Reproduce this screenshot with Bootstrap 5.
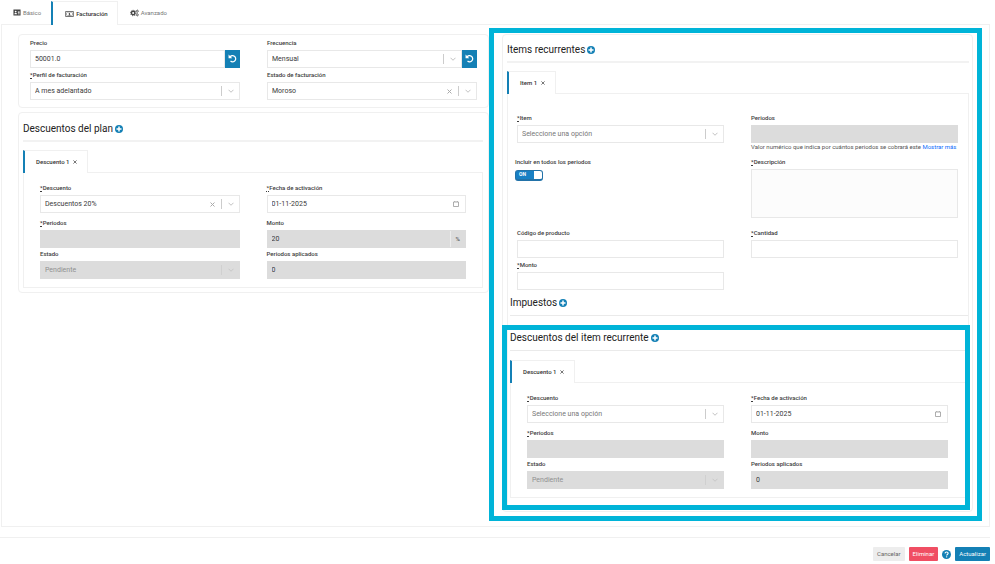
<!DOCTYPE html>
<html lang="es">
<head>
<meta charset="utf-8">
<meta name="viewport" content="width=device-width, initial-scale=1">
<title>Facturación</title>
<link rel="stylesheet" href="https://cdn.jsdelivr.net/npm/bootstrap@5.3.0/dist/css/bootstrap.min.css">
<style>
:root { --line: #f0f0f0; --field-line: #e8e8e8; --brand: #1480b5; --callout: #00b4d8; --ink: #484848; }
body { font-family: Roboto, "Liberation Sans", sans-serif; font-size: 6px; line-height: 12px; color: var(--ink); background: #fff; }
svg { display: block; flex: none; }
.main-tabs { height: 24px; padding-left: 2px; padding-top: 1px; }
.main-tabs .tab-link { display: flex; align-items: center; gap: 2px; padding: 0 10px 0 11px; border: 0; background: none; color: #777; }
.main-tabs .tab-link svg { color: #444; }
.main-tabs .tab-link.current, .sub-tab { border: 1px solid var(--line); border-left: 2px solid var(--brand); border-bottom: 0; background: #fff; color: #333; font-weight: 500; margin-bottom: -1px; }
.main-tabs .tab-link.current { padding-left: 12px; padding-right: 9px; margin-right: 1px; }
.main-panel { border: 1px solid var(--line); margin: 0 5px 0 1px; padding: 3px 7px 5px 16px; }
.split { grid-template-columns: minmax(0, 471fr) minmax(0, 493fr); }
.left-col { padding-top: 6px; }
.panel { border: 1px solid var(--line); border-radius: 4px; }
.rates { padding: 2px 11px 7px; margin-bottom: 4px; }
.plan { padding: 7px 5px 4px 4px; }
.spot { border: 5px solid var(--callout); padding: 1px 4px 4px 8px; }
.recurring { padding: 6px 3px 1px 4px; }
.heading { display: flex; align-items: center; gap: 2px; height: 18px; margin: 0; font-size: 10px; line-height: 18px; font-weight: 400; color: #222; }
.add-btn, .clear-btn { border: 0; background: none; padding: 0; line-height: 1; color: var(--brand); }
.rule { border: 0; border-top: 1px solid #eaeaea; margin: 3px 0 9px; opacity: 1; }
.rule-wide { border-top: 2px solid #f2f2f2; margin: 2px 0 8px; }
.sub-tab { display: flex; align-items: center; gap: 4px; width: max-content; height: 23px; padding: 0 10px 0 11px; position: relative; }
.sub-tab button { border: 0; background: none; padding: 0; color: #555; }
.sub-body { border: 1px solid var(--line); }
.plan .sub-body { padding: 9px 16px 8px; }
.item-body { padding: 18px 10px 4px 9px; }
.fields { display: grid; grid-template-columns: repeat(2, minmax(0, 1fr)); column-gap: 27px; }
.fields-even { row-gap: 1px; }
.roomy { margin-bottom: 4px; }
.name { display: block; height: 12px; margin-bottom: 1px; line-height: 12px; font-weight: 500; color: #3c3c3c; }
.name abbr { text-decoration: underline dotted; cursor: default; }
.box { display: flex; align-items: center; height: 18px; border: 1px solid var(--field-line); background: #fff; }
.box input, .box select { flex: 1; min-width: 0; height: 16px; padding: 0 4px; border: 0; background: none; color: #3a3a3a; font-size: 7px; line-height: 16px; appearance: none; outline: 0; opacity: 1; }
.box select.empty { color: #777; }
.box.off { background: #dcdcdc; border-color: #dcdcdc; }
.box.off select { color: #909090; }
.box .bar { width: 1px; height: 10px; background: #ccc; margin-right: 6px; }
.box .chev { color: #bbb; margin-right: 5px; }
.box.off .bar { background: #d0d0d0; }
.box.off .chev { color: #c4c4c4; }
.box .cal { margin-right: 6px; color: #999; }
.clear-btn { color: #aaa; margin-right: 6px; }
.unit { padding: 0 5px; height: 16px; line-height: 16px; border-left: 1px solid #ececec; }
.undo { display: grid; place-items: center; width: 15px; height: 18px; padding: 0 0 2px; border: 0; background: var(--brand); color: #fff; }
.area { display: block; width: 100%; height: 49px; border: 1px solid var(--field-line); background: #fcfcfc; resize: none; font-size: 7px; }
.hint { line-height: 8px; color: #555; white-space: nowrap; }
.hint a { color: #0d6efd; text-decoration: none; }
.item-row { height: 43px; }
.desc-row { height: 70px; }
.toggle-field { margin-left: -2px; }
.toggle { appearance: none; display: block; width: 28px; height: 11px; margin: 2px 0 0; border: 1px solid #2272a8; border-bottom-width: 2px; border-radius: 3px; background: linear-gradient(to right, #1880c4 18px, #fff 18px); }
.toggle-wrap { position: relative; }
.toggle-wrap span { position: absolute; left: 4px; top: 0; font-size: 5px; line-height: 9px; font-weight: 700; color: #fff; pointer-events: none; }
.taxes { padding-left: 2px; }
.taxes .rule { margin-bottom: 0; }
.nested { position: relative; margin-top: 9px; padding: 4px 0 12px 2px; }
.nested::after { content: ""; position: absolute; inset: 0 -2px 0 -6px; border: 5px solid var(--callout); pointer-events: none; }
.nested .sub-body { padding: 9px 19px 8px 16px; }
.foot { margin: 10px 5px 0 0; padding-top: 9px; border-top: 1px solid var(--line); gap: 4px; }
.act { height: 14px; padding: 0 4px; border: 0; border-radius: 1px; line-height: 14px; color: #fff; background: var(--brand); }
.act.quiet { background: #ededed; color: #666; }
.act.drop { background: #f04e63; }
</style>
<script src="https://cdn.jsdelivr.net/npm/bootstrap@5.3.0/dist/js/bootstrap.bundle.min.js"></script>
</head>
<body>
<svg class="d-none" aria-hidden="true">
  <symbol id="plus" viewBox="0 0 16 16"><circle cx="8" cy="8" r="8" fill="currentColor"/><path d="M8 3v10M3 8h10" stroke="#fff" stroke-width="3"/></symbol>
  <symbol id="chevron" viewBox="0 0 12 8"><path d="M1 1.500l5 5 5-5" fill="none" stroke="currentColor" stroke-width="1.800"/></symbol>
  <symbol id="cross" viewBox="0 0 10 10"><path d="M1 1l8 8M9 1l-8 8" stroke="currentColor" stroke-width="2"/></symbol>
  <symbol id="calendar" viewBox="0 0 12 12"><path d="M1 2h10v9H1zM3.500 0v2M8.500 0v2" fill="none" stroke="currentColor" stroke-width="1.600"/></symbol>
  <symbol id="undo" viewBox="0 0 16 16"><path d="M3.500 5.500A5.500 5.500 0 1 1 4.500 12.500" fill="none" stroke="currentColor" stroke-width="2.200"/><path d="M1 1v6.500h6.500z" fill="currentColor"/></symbol>
  <symbol id="idcard" viewBox="0 0 18 14"><path fill="currentColor" fill-rule="evenodd" d="M1 0h16v14H1zM6 3a2 2 0 1 0 0 4 2 2 0 0 0 0-4zM3 11h6c0-2-1-3-3-3s-3 1-3 3zM11 3.500v1.500h4V3.500zm0 3v1.500h4V6.500zm0 3V11h4V9.500z"/></symbol>
  <symbol id="money" viewBox="0 0 20 14"><path d="M1 1h18v12H1z" fill="none" stroke="currentColor" stroke-width="1.800"/><path d="M3 5a3 3 0 0 0 2-2h10a3 3 0 0 0 2 2v4a3 3 0 0 0-2 2H5a3 3 0 0 0-2-2z" fill="none" stroke="currentColor" stroke-width=".8"/><path d="M8 4.500h3V9h1.500v1.500h-5V9H9V6H8z" fill="currentColor"/></symbol>
  <symbol id="gears" viewBox="0 0 20 16"><circle cx="7" cy="8" r="3.800" fill="none" stroke="currentColor" stroke-width="3"/><circle cx="7" cy="8" r="6" fill="none" stroke="currentColor" stroke-width="2" stroke-dasharray="2.400 2.310"/><circle cx="16" cy="4" r="2" fill="none" stroke="currentColor" stroke-width="1.500"/><circle cx="16" cy="4" r="3.200" fill="none" stroke="currentColor" stroke-width="1" stroke-dasharray="1.600 1.750"/><circle cx="16" cy="12" r="2" fill="none" stroke="currentColor" stroke-width="1.500"/><circle cx="16" cy="12" r="3.200" fill="none" stroke="currentColor" stroke-width="1" stroke-dasharray="1.600 1.750"/></symbol>
  <symbol id="help" viewBox="0 0 16 16"><circle cx="8" cy="8" r="8" fill="currentColor"/><path d="M5.300 6c.2-1.600 1.300-2.400 2.800-2.400 1.600 0 2.800.9 2.800 2.300 0 2-2.600 1.900-2.600 3.800" fill="none" stroke="#fff" stroke-width="2"/><circle cx="8.200" cy="12.200" r="1.300" fill="#fff"/></symbol>
</svg>

<nav class="main-tabs d-flex" aria-label="Secciones">
  <button class="tab-link" type="button"><svg width="8" height="7"><use href="#idcard"/></svg>Básico</button>
  <button class="tab-link current" type="button"><svg width="9" height="6"><use href="#money"/></svg>Facturación</button>
  <button class="tab-link" type="button"><svg width="9" height="8"><use href="#gears"/></svg>Avanzado</button>
</nav>

<main class="main-panel">
  <div class="split d-grid">
    <div class="left-col">
      <section class="panel rates">
        <div class="fields fields-even">
          <div>
            <label class="name" for="price">Precio</label>
            <div class="d-flex"><div class="box flex-grow-1"><input id="price" type="text" value="50001.0"></div><button class="undo" type="button" aria-label="Restablecer precio"><svg width="9" height="9"><use href="#undo"/></svg></button></div>
          </div>
          <div>
            <label class="name" for="freq">Frecuencia</label>
            <div class="d-flex"><div class="box flex-grow-1"><select id="freq"><option>Mensual</option></select><span class="bar"></span><svg class="chev" width="6" height="4"><use href="#chevron"/></svg></div><button class="undo" type="button" aria-label="Restablecer frecuencia"><svg width="9" height="9"><use href="#undo"/></svg></button></div>
          </div>
          <div>
            <label class="name" for="profile"><abbr>*</abbr>Perfil de facturación</label>
            <div class="box"><select id="profile"><option>A mes adelantado</option></select><span class="bar"></span><svg class="chev" width="6" height="4"><use href="#chevron"/></svg></div>
          </div>
          <div>
            <label class="name" for="billing">Estado de facturación</label>
            <div class="box"><select id="billing"><option>Moroso</option></select><button class="clear-btn" type="button" aria-label="Quitar"><svg width="5" height="5"><use href="#cross"/></svg></button><span class="bar"></span><svg class="chev" width="6" height="4"><use href="#chevron"/></svg></div>
          </div>
        </div>
      </section>

      <section class="panel plan">
        <h2 class="heading">Descuentos del plan <button class="add-btn" type="button" aria-label="Agregar descuento"><svg width="8" height="8"><use href="#plus"/></svg></button></h2>
        <hr class="rule rule-wide">
        <div class="sub-tab">Descuento 1 <button type="button" aria-label="Cerrar"><svg width="4" height="4"><use href="#cross"/></svg></button></div>
        <div class="sub-body">
          <div class="fields">
            <div class="roomy">
              <label class="name" for="disc"><abbr>*</abbr>Descuento</label>
              <div class="box"><select id="disc"><option>Descuentos 20%</option></select><button class="clear-btn" type="button" aria-label="Quitar"><svg width="5" height="5"><use href="#cross"/></svg></button><span class="bar"></span><svg class="chev" width="6" height="4"><use href="#chevron"/></svg></div>
            </div>
            <div class="roomy">
              <label class="name" for="date"><abbr>*</abbr>Fecha de activación</label>
              <div class="box"><input id="date" type="text" value="01-11-2025"><svg class="cal" width="6" height="6"><use href="#calendar"/></svg></div>
            </div>
            <div>
              <label class="name" for="periods"><abbr>*</abbr>Periodos</label>
              <div class="box off"><input id="periods" type="text" disabled></div>
            </div>
            <div>
              <label class="name" for="amount">Monto</label>
              <div class="box off"><input id="amount" type="text" value="20" disabled><span class="unit">%</span></div>
            </div>
            <div>
              <label class="name" for="state">Estado</label>
              <div class="box off"><select id="state" disabled><option>Pendiente</option></select><span class="bar"></span><svg class="chev" width="6" height="4"><use href="#chevron"/></svg></div>
            </div>
            <div>
              <label class="name" for="applied">Periodos aplicados</label>
              <div class="box off"><input id="applied" type="text" value="0" disabled></div>
            </div>
          </div>
        </div>
      </section>
    </div>

    <div class="spot">
      <section class="panel recurring">
        <h2 class="heading">Items recurrentes <button class="add-btn" type="button" aria-label="Agregar item"><svg width="8" height="8"><use href="#plus"/></svg></button></h2>
        <hr class="rule rule-wide">
        <div class="sub-tab">Item 1 <button type="button" aria-label="Cerrar"><svg width="4" height="4"><use href="#cross"/></svg></button></div>
        <div class="sub-body border-bottom-0">
          <div class="item-body">
            <div class="fields fields-even">
              <div class="item-row">
                <label class="name" for="item"><abbr>*</abbr>Item</label>
                <div class="box"><select id="item" class="empty"><option>Seleccione una opción</option></select><span class="bar"></span><svg class="chev" width="6" height="4"><use href="#chevron"/></svg></div>
              </div>
              <div class="item-row">
                <label class="name" for="iperiods">Periodos</label>
                <div class="box off"><input id="iperiods" type="text" disabled></div>
                <div class="hint">Valor numérico que indica por cuántos periodos se cobrará este <a href="#">Mostrar más</a></div>
              </div>
              <div class="desc-row toggle-field">
                <label class="name" for="all">Incluir en todos los periodos</label>
                <div class="toggle-wrap"><input id="all" class="toggle" type="checkbox" role="switch" checked><span>ON</span></div>
              </div>
              <div class="desc-row">
                <label class="name" for="desc"><abbr>*</abbr>Descripción</label>
                <textarea id="desc" class="area"></textarea>
              </div>
              <div>
                <label class="name" for="code">Código de producto</label>
                <div class="box"><input id="code" type="text"></div>
              </div>
              <div>
                <label class="name" for="qty"><abbr>*</abbr>Cantidad</label>
                <div class="box"><input id="qty" type="text"></div>
              </div>
              <div>
                <label class="name" for="iamount"><abbr>*</abbr>Monto</label>
                <div class="box"><input id="iamount" type="text"></div>
              </div>
            </div>
          </div>
          <div class="taxes">
            <h3 class="heading">Impuestos <button class="add-btn" type="button" aria-label="Agregar impuesto"><svg width="8" height="8"><use href="#plus"/></svg></button></h3>
            <hr class="rule">
          </div>
          <div class="nested">
            <h3 class="heading">Descuentos del item recurrente <button class="add-btn" type="button" aria-label="Agregar descuento al item"><svg width="8" height="8"><use href="#plus"/></svg></button></h3>
            <hr class="rule">
            <div class="sub-tab">Descuento 1 <button type="button" aria-label="Cerrar"><svg width="4" height="4"><use href="#cross"/></svg></button></div>
            <div class="sub-body">
              <div class="fields">
                <div class="roomy">
                  <label class="name" for="idisc"><abbr>*</abbr>Descuento</label>
                  <div class="box"><select id="idisc" class="empty"><option>Seleccione una opción</option></select><span class="bar"></span><svg class="chev" width="6" height="4"><use href="#chevron"/></svg></div>
                </div>
                <div class="roomy">
                  <label class="name" for="idate"><abbr>*</abbr>Fecha de activación</label>
                  <div class="box"><input id="idate" type="text" value="01-11-2025"><svg class="cal" width="6" height="6"><use href="#calendar"/></svg></div>
                </div>
                <div>
                  <label class="name" for="dperiods"><abbr>*</abbr>Periodos</label>
                  <div class="box off"><input id="dperiods" type="text" disabled></div>
                </div>
                <div>
                  <label class="name" for="damount">Monto</label>
                  <div class="box off"><input id="damount" type="text" disabled></div>
                </div>
                <div>
                  <label class="name" for="dstate">Estado</label>
                  <div class="box off"><select id="dstate" disabled><option>Pendiente</option></select><span class="bar"></span><svg class="chev" width="6" height="4"><use href="#chevron"/></svg></div>
                </div>
                <div>
                  <label class="name" for="dapplied">Periodos aplicados</label>
                  <div class="box off"><input id="dapplied" type="text" value="0" disabled></div>
                </div>
              </div>
            </div>
          </div>
        </div>
      </section>
    </div>
  </div>
</main>

<footer class="foot d-flex justify-content-end align-items-center">
  <button class="act quiet" type="button">Cancelar</button>
  <button class="act drop" type="button">Eliminar</button>
  <button class="add-btn" type="button" aria-label="Ayuda"><svg width="9" height="9"><use href="#help"/></svg></button>
  <button class="act" type="button">Actualizar</button>
</footer>
</body>
</html>
